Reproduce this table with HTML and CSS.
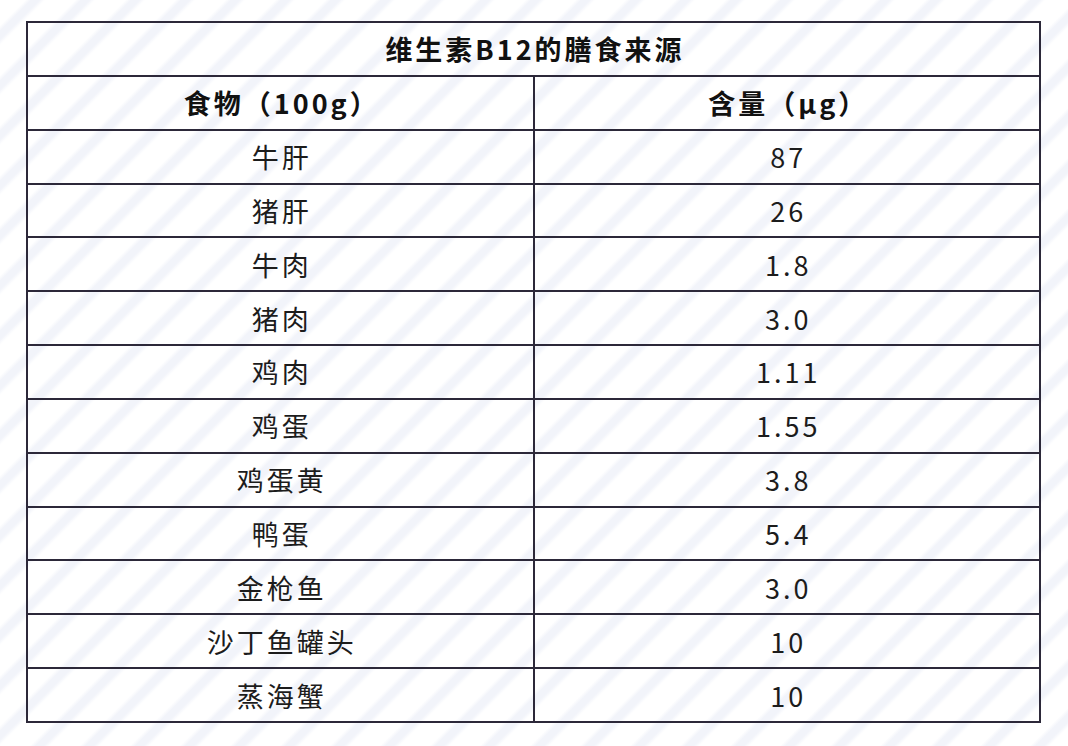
FILE: index.html
```html
<!DOCTYPE html>
<html lang="zh-CN">
<head>
<meta charset="utf-8">
<title>维生素B12的膳食来源</title>
<link rel="stylesheet" href="styles.css">
</head>
<body>
<table class="food-table">
  <tr><th class="title" colspan="2">维生素B12的膳食来源</th></tr>
  <tr><th>食物（100g）</th><th>含量（μg）</th></tr>
  <tr><td>牛肝</td><td>87</td></tr>
  <tr><td>猪肝</td><td>26</td></tr>
  <tr><td>牛肉</td><td>1.8</td></tr>
  <tr><td>猪肉</td><td>3.0</td></tr>
  <tr><td>鸡肉</td><td>1.11</td></tr>
  <tr><td>鸡蛋</td><td>1.55</td></tr>
  <tr><td>鸡蛋黄</td><td>3.8</td></tr>
  <tr><td>鸭蛋</td><td>5.4</td></tr>
  <tr><td>金枪鱼</td><td>3.0</td></tr>
  <tr><td>沙丁鱼罐头</td><td>10</td></tr>
  <tr><td>蒸海蟹</td><td>10</td></tr>
</table>
</body>
</html>
```

FILE: styles.css
```css
html, body {
  margin: 0;
  padding: 0;
}
body {
  width: 1068px;
  height: 746px;
  overflow: hidden;
  background-color: #ffffff;
  background-image: repeating-linear-gradient(135deg,
    #ffffff 0px, #ffffff 18px,
    #f2f4fa 22px, #f2f4fa 28px,
    #ffffff 32px, #ffffff 35.36px);
  font-family: "Noto Sans CJK SC", "Noto Sans", sans-serif;
  color: #1c1c1c;
}
.food-table {
  margin: 21px 0 0 26px;
  border-collapse: separate;
  border-spacing: 0;
  border-top: 2px solid #2c2839;
  border-left: 2px solid #2c2839;
  table-layout: fixed;
  width: 1015px;
}
.food-table th,
.food-table td {
  border-right: 2px solid #2c2839;
  border-bottom: 2px solid #2c2839;
  height: 51.85px;
  padding: 0 0 0 3px;
  text-align: center;
  vertical-align: middle;
  font-size: 27px;
  letter-spacing: 3px;
  line-height: 1;
  box-sizing: content-box;
}
.food-table th {
  font-weight: 700;
  color: #111111;
}
.food-table td {
  font-weight: 400;
}
.food-table tr > :first-child {
  width: 502px;
}
.food-table .title {
  width: auto;
}
```
